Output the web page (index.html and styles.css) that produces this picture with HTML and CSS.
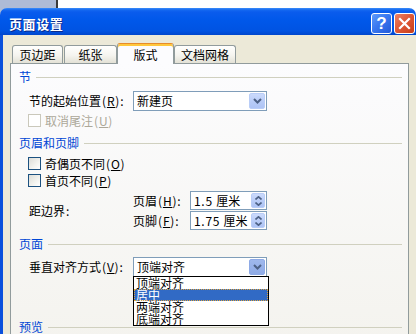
FILE: index.html
```html
<!DOCTYPE html>
<html lang="zh-CN">
<head>
<meta charset="utf-8">
<title>页面设置</title>
<link rel="stylesheet" href="styles.css">
</head>
<body>
<div class="dialog">
  <div class="titlebar">
    <span class="title">页面设置</span>
    <div class="caption-btns">
      <span class="cbtn help">?</span>
      <span class="cbtn close"><svg width="13" height="13" viewBox="0 0 13 13"><path d="M2 2 L11 11 M11 2 L2 11" stroke="#fff" stroke-width="2.2" stroke-linecap="square"/></svg></span>
    </div>
  </div>
  <div class="client">
    <div class="tabs">
      <div class="tab tab-w1">页边距</div>
      <div class="tab tab-w2">纸张</div>
      <div class="tab tab-active">版式</div>
      <div class="tab tab-w4">文档网格</div>
    </div>
    <div class="page">
      <div class="grp">节</div>
      <div class="field mt7">
        <span class="lbl">节的起始位置<span class="mn">(<u>R</u>):</span></span>
        <div class="select">
          <span>新建页</span>
          <span class="dd-btn"><svg width="9" height="6" viewBox="0 0 9 6"><path d="M1 1 L4.5 4.5 L8 1" fill="none" stroke="#4d6185" stroke-width="2"/></svg></span>
        </div>
      </div>
      <div class="chk chk-disabled mt3"><span class="box"></span>取消尾注<span class="mn">(<u>U</u>)</span></div>

      <div class="grp mt9">页眉和页脚</div>
      <div class="chk mt7"><span class="box"></span>奇偶页不同<span class="mn">(<u>O</u>)</span></div>
      <div class="chk mt4"><span class="box"></span>首页不同<span class="mn">(<u>P</u>)</span></div>
      <div class="margins">
        <span class="lbl-main">距边界<span class="mn">:</span></span>
        <span>页眉<span class="mn">(<u>H</u>):</span></span>
        <div class="spin"><span class="num">1.5 </span><span>厘米</span><span class="spin-btn"><svg width="7" height="4" viewBox="0 0 7 4"><path d="M0.5 3.5 L3.5 0.8 L6.5 3.5" fill="none" stroke="#4d6185" stroke-width="1.6"/></svg><svg width="7" height="4" viewBox="0 0 7 4"><path d="M0.5 0.5 L3.5 3.2 L6.5 0.5" fill="none" stroke="#4d6185" stroke-width="1.6"/></svg></span></div>
        <span>页脚<span class="mn">(<u>F</u>):</span></span>
        <div class="spin"><span class="num">1.75 </span><span>厘米</span><span class="spin-btn"><svg width="7" height="4" viewBox="0 0 7 4"><path d="M0.5 3.5 L3.5 0.8 L6.5 3.5" fill="none" stroke="#4d6185" stroke-width="1.6"/></svg><svg width="7" height="4" viewBox="0 0 7 4"><path d="M0.5 0.5 L3.5 3.2 L6.5 0.5" fill="none" stroke="#4d6185" stroke-width="1.6"/></svg></span></div>
      </div>

      <div class="grp mt7">页面</div>
      <div class="field mt6">
        <span class="lbl">垂直对齐方式<span class="mn">(<u>V</u>):</span></span>
        <div class="select select-open">
          <span>顶端对齐</span>
          <span class="dd-btn dd-pressed"><svg width="9" height="6" viewBox="0 0 9 6"><path d="M1 1 L4.5 4.5 L8 1" fill="none" stroke="#4d6185" stroke-width="2"/></svg></span>
          <div class="list">
            <div class="item">顶端对齐</div>
            <div class="item item-sel">居中</div>
            <div class="item">两端对齐</div>
            <div class="item">底端对齐</div>
          </div>
        </div>
      </div>

      <div class="grp mt43">预览</div>
    </div>
  </div>
</div>
</body>
</html>
```

FILE: styles.css
```css
* { box-sizing: border-box; }

html, body {
  margin: 0;
  padding: 0;
  width: 416px;
  height: 334px;
  overflow: hidden;
}

body {
  font-family: "Noto Sans CJK SC", "Noto Sans", sans-serif;
  font-size: 12px;
  color: #000;
  background: linear-gradient(to right, #aebbd6 0 56px, #3a3a3a 56px 58px, #ffffff 58px);
}

u { text-decoration: underline; text-underline-offset: 1px; }

.mn { letter-spacing: 0.8px; margin-left: 1px; }

.num { letter-spacing: 0.7px; white-space: pre; }

.dialog {
  margin-top: 8px;
  width: 416px;
}

.titlebar {
  height: 27px;
  display: flex;
  align-items: flex-start;
  padding: 0 1px 0 9px;
  border-radius: 7px 7px 0 0;
  background: linear-gradient(to bottom, #3b8cf9 0, #1468f0 2px, #0a5ced 4px, #0058ea 45%, #0053e2 85%, #0046cc 100%);
}

.title {
  color: #fff;
  font-weight: bold;
  font-size: 13px;
  letter-spacing: 0.6px;
  line-height: 16px;
  margin-top: 8px;
  text-shadow: 1px 1px 0 #0a2a8a;
}

.caption-btns {
  margin-left: auto;
  margin-top: 5px;
  display: flex;
  gap: 2px;
}

.cbtn {
  width: 21px;
  height: 21px;
  border: 1px solid #fff;
  border-radius: 3px;
  display: flex;
  align-items: center;
  justify-content: center;
}

.help {
  background: linear-gradient(135deg, #5e9bfb 0%, #3a78f0 45%, #2259d8 100%);
  color: #fff;
  font-family: "Liberation Sans", Arial, sans-serif;
  font-weight: bold;
  font-size: 17px;
  line-height: 1;
}

.close {
  background: linear-gradient(135deg, #ec8266 0%, #e05a38 45%, #c63d1a 100%);
}

.client {
  background: #ece9d8;
  border-left: 3px solid #0a50dc;
  padding: 8px 7px 0 7px;
  height: 300px;
}

.tabs {
  display: flex;
  align-items: flex-end;
  height: 20px;
  padding-left: 2px;
  position: relative;
  z-index: 1;
}

.tab {
  height: 18px;
  border: 1px solid #919b9c;
  border-bottom: none;
  border-radius: 3px 3px 0 0;
  background: linear-gradient(to bottom, #fffffe 0%, #f5f4ef 55%, #e3e1d6 100%);
  display: flex;
  align-items: center;
  justify-content: center;
  line-height: 12px;
}

.tab-w1 { width: 51px; }
.tab-w2 { width: 53px; margin-left: 1px; }
.tab-w4 { width: 62px; }

.tab-active {
  width: 57px;
  height: 21px;
  margin-bottom: -1px;
  background: #fcfcfe;
  border-top-color: #e68b2c;
  box-shadow: inset 0 2px 0 #ffc73c;
  padding-top: 2px;
}

.page {
  border: 1px solid #919b9c;
  background: linear-gradient(to bottom, #fcfcfe 0, #f4f3ee 280px);
  height: 300px;
  padding: 6px 6px 0 8px;
}

.grp {
  display: flex;
  align-items: center;
  height: 14px;
  line-height: 12px;
  color: #0046d5;
}

.grp::after {
  content: "";
  flex: 1;
  height: 1px;
  margin-left: 5px;
  margin-top: 1px;
  background: #d0d0bf;
}

.mt3 { margin-top: 3px; }
.mt4 { margin-top: 4px; }
.mt6 { margin-top: 6px; }
.mt7 { margin-top: 7px; }
.mt9 { margin-top: 9px; }
.mt43 { margin-top: 43px; }

.field {
  display: flex;
  align-items: center;
  height: 20px;
  margin-left: 10px;
  line-height: 12px;
}

.lbl { width: 104px; }

.select {
  position: relative;
  width: 134px;
  height: 20px;
  border: 1px solid #7f9db9;
  background: #fff;
  display: flex;
  align-items: center;
  padding-left: 3px;
}

.dd-btn {
  margin-left: auto;
  margin-right: 1px;
  width: 16px;
  height: 16px;
  border-radius: 2px;
  border: 1px solid #b9cdf7;
  background: linear-gradient(to bottom, #cbdafc 0%, #b7cbf7 60%, #aec4f5 100%);
  display: flex;
  align-items: center;
  justify-content: center;
}

.dd-pressed {
  border-color: #8eaae6;
  background: linear-gradient(to bottom, #9fb8ec 0%, #8fabe6 100%);
}

.list {
  position: absolute;
  left: -1px;
  top: 18px;
  width: 136px;
  border: 1px solid #000;
  background: #fff;
  z-index: 2;
}

.item {
  height: 12px;
  line-height: 12px;
  padding-left: 2px;
  white-space: nowrap;
}

.item-sel {
  background: #316ac5;
  color: #fff;
  outline: 1px dotted #e0a43c;
  outline-offset: -1px;
}

.chk {
  display: flex;
  align-items: center;
  height: 13px;
  margin-left: 9px;
  line-height: 12px;
}

.box {
  width: 13px;
  height: 13px;
  margin-right: 4px;
  border: 1px solid #1c5180;
  background: linear-gradient(135deg, #dcdcd7 0%, #f3f3ef 60%, #ffffff 100%);
}

.chk-disabled { color: #aca899; }
.chk-disabled .box {
  border-color: #cac8bb;
  background: #fff;
}

.margins {
  display: grid;
  grid-template-columns: 104px 57px 77px;
  grid-template-rows: 19px 19px;
  row-gap: 1px;
  align-items: center;
  margin-left: 10px;
  margin-top: 4px;
  line-height: 12px;
}

.lbl-main { grid-row: 1 / span 2; }

.spin {
  height: 19px;
  border: 1px solid #7f9db9;
  background: #fff;
  display: flex;
  align-items: center;
  padding-left: 3px;
  white-space: pre;
}

.spin-btn {
  margin-left: auto;
  margin-right: 1px;
  width: 14px;
  height: 15px;
  border-radius: 2px;
  border: 1px solid #b9cdf7;
  background: linear-gradient(to bottom, #cbdafc 0%, #b7cbf7 60%, #aec4f5 100%);
  display: flex;
  flex-direction: column;
  align-items: center;
  justify-content: center;
  gap: 2px;
}

.spin-btn svg { display: block; }
```
